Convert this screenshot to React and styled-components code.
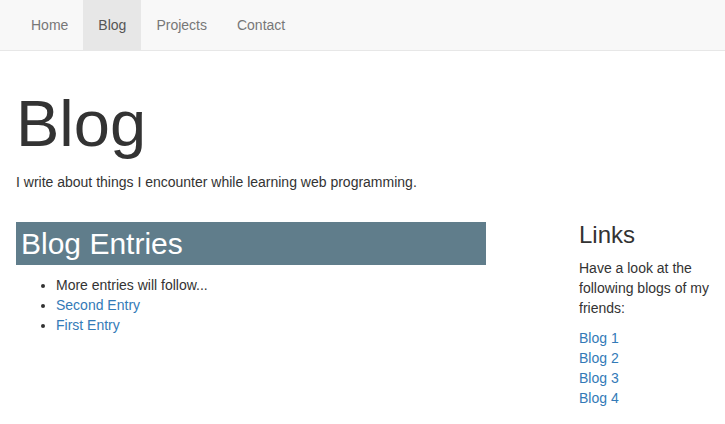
import React from "react";
import styled, { createGlobalStyle } from "styled-components";

const GlobalStyle = createGlobalStyle`
  * { box-sizing: border-box; }
  body {
    margin: 0;
    font-family: "Liberation Sans", Arial, sans-serif;
    font-size: 14px;
    line-height: 20px;
    color: #333;
    background: #fff;
  }
`;

const Navbar = styled.nav`
  display: flex;
  height: 51px;
  padding: 0 16px;
  background: #f8f8f8;
  border-bottom: 1px solid #e7e7e7;
`;

const NavItem = styled.a`
  display: block;
  padding: 15px;
  line-height: 20px;
  color: ${(p) => (p.active ? "#555" : "#777")};
  background: ${(p) => (p.active ? "#e7e7e7" : "transparent")};
  text-decoration: none;
`;

const Page = styled.div`
  padding: 0 12px 0 16px;
`;

const Title = styled.h1`
  margin: 37px 0 12px;
  font-size: 65px;
  font-weight: 500;
  line-height: 72px;
  color: #333;
`;

const Lead = styled.p`
  margin: 0 0 10px;
`;

const Columns = styled.div`
  display: grid;
  grid-template-columns: 470px 1fr;
  column-gap: 93px;
`;

const EntriesHeading = styled.h2`
  margin: 20px 0 10px;
  padding: 5px 5px;
  font-size: 30px;
  font-weight: 500;
  line-height: 33px;
  color: #fff;
  background: #607d8b;
`;

const EntryList = styled.ul`
  margin: 0;
  padding-left: 40px;
`;

const Link = styled.a`
  color: #337ab7;
  text-decoration: none;
`;

const SideHeading = styled.h3`
  margin: 20px 0 10px;
  font-size: 24px;
  font-weight: 500;
  line-height: 26px;
`;

const SideText = styled.p`
  margin: 0 0 10px;
`;

const LinkList = styled.div`
  display: flex;
  flex-direction: column;
`;

const entries = ["Second Entry", "First Entry"];
const friends = ["Blog 1", "Blog 2", "Blog 3", "Blog 4"];

export default function App() {
  return (
    <>
      <GlobalStyle />
      <Navbar>
        <NavItem href="#">Home</NavItem>
        <NavItem href="#" active>Blog</NavItem>
        <NavItem href="#">Projects</NavItem>
        <NavItem href="#">Contact</NavItem>
      </Navbar>
      <Page>
        <Title>Blog</Title>
        <Lead>I write about things I encounter while learning web programming.</Lead>
        <Columns>
          <div>
            <EntriesHeading>Blog Entries</EntriesHeading>
            <EntryList>
              <li>More entries will follow...</li>
              {entries.map((e) => (
                <li key={e}>
                  <Link href="#">{e}</Link>
                </li>
              ))}
            </EntryList>
          </div>
          <div>
            <SideHeading>Links</SideHeading>
            <SideText>Have a look at the following blogs of my friends:</SideText>
            <LinkList>
              {friends.map((f) => (
                <Link key={f} href="#">{f}</Link>
              ))}
            </LinkList>
          </div>
        </Columns>
      </Page>
    </>
  );
}
